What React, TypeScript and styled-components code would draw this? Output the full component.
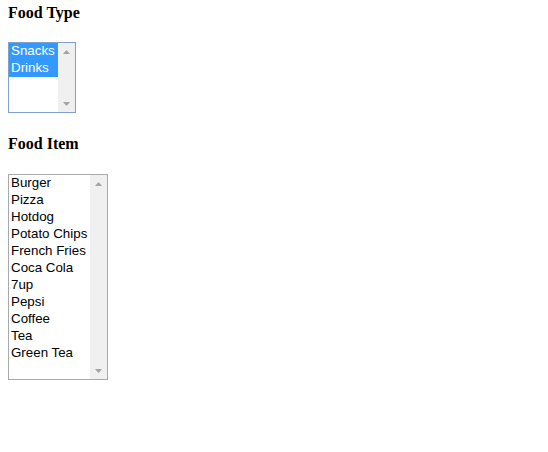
import React from 'react';
import styled, { createGlobalStyle } from 'styled-components';

const GlobalStyle = createGlobalStyle`
  body {
    margin: 0;
    background: #fff;
  }
`;

const Page = styled.div`
  display: flex;
  flex-direction: column;
  align-items: flex-start;
  padding: 4px 8px;
`;

const Heading = styled.h4<{ $gap: number }>`
  margin: ${({ $gap }) => `${$gap}px 0 0`};
  font-family: 'Liberation Serif', 'Times New Roman', serif;
  font-size: 16px;
  font-weight: bold;
  line-height: 18px;
  color: #000;
`;

const ListBox = styled.div<{ $width: number; $height: number; $gap: number; $focused?: boolean }>`
  display: flex;
  box-sizing: border-box;
  width: ${({ $width }) => `${$width}px`};
  height: ${({ $height }) => `${$height}px`};
  margin-top: ${({ $gap }) => `${$gap}px`};
  border: 1px solid ${({ $focused }) => ($focused ? '#7da2ce' : '#a9a9a9')};
  background: #fff;
  overflow: hidden;
`;

const Options = styled.div`
  display: flex;
  flex: 1;
  flex-direction: column;
  min-width: 0;
`;

const Option = styled.div<{ $selected?: boolean }>`
  box-sizing: border-box;
  height: 17px;
  padding: 0 2px 1px;
  font-family: 'Liberation Sans', Arial, sans-serif;
  font-size: 13.33px;
  line-height: 16px;
  white-space: nowrap;
  color: ${({ $selected }) => ($selected ? '#fff' : '#000')};
  background: ${({ $selected }) => ($selected ? '#3399ff' : 'transparent')};
`;

const Scrollbar = styled.div`
  display: flex;
  flex: 0 0 17px;
  flex-direction: column;
  justify-content: space-between;
  background: #f0f0f0;
`;

const Arrow = styled.div`
  display: flex;
  align-items: center;
  justify-content: center;
  height: 17px;
`;

const ArrowIcon = ({ down }: { down?: boolean }) => (
  <svg width="7" height="4" viewBox="0 0 7 4">
    <path d={down ? 'M0 0 H7 L3.5 4 Z' : 'M0 4 H7 L3.5 0 Z'} fill="#a3a3a3" />
  </svg>
);

const foodTypes = [
  { label: 'Snacks', selected: true },
  { label: 'Drinks', selected: true },
];

const foodItems = [
  'Burger',
  'Pizza',
  'Hotdog',
  'Potato Chips',
  'French Fries',
  'Coca Cola',
  '7up',
  'Pepsi',
  'Coffee',
  'Tea',
  'Green Tea',
];

const ScrollTrack = () => (
  <Scrollbar>
    <Arrow>
      <ArrowIcon />
    </Arrow>
    <Arrow>
      <ArrowIcon down />
    </Arrow>
  </Scrollbar>
);

export default function App() {
  return (
    <>
      <GlobalStyle />
      <Page>
        <Heading $gap={0}>Food Type</Heading>
        <ListBox $width={68} $height={71} $gap={20} $focused>
          <Options>
            {foodTypes.map((t) => (
              <Option key={t.label} $selected={t.selected}>
                {t.label}
              </Option>
            ))}
          </Options>
          <ScrollTrack />
        </ListBox>

        <Heading $gap={22}>Food Item</Heading>
        <ListBox $width={100} $height={206} $gap={21}>
          <Options>
            {foodItems.map((item) => (
              <Option key={item}>{item}</Option>
            ))}
          </Options>
          <ScrollTrack />
        </ListBox>
      </Page>
    </>
  );
}
